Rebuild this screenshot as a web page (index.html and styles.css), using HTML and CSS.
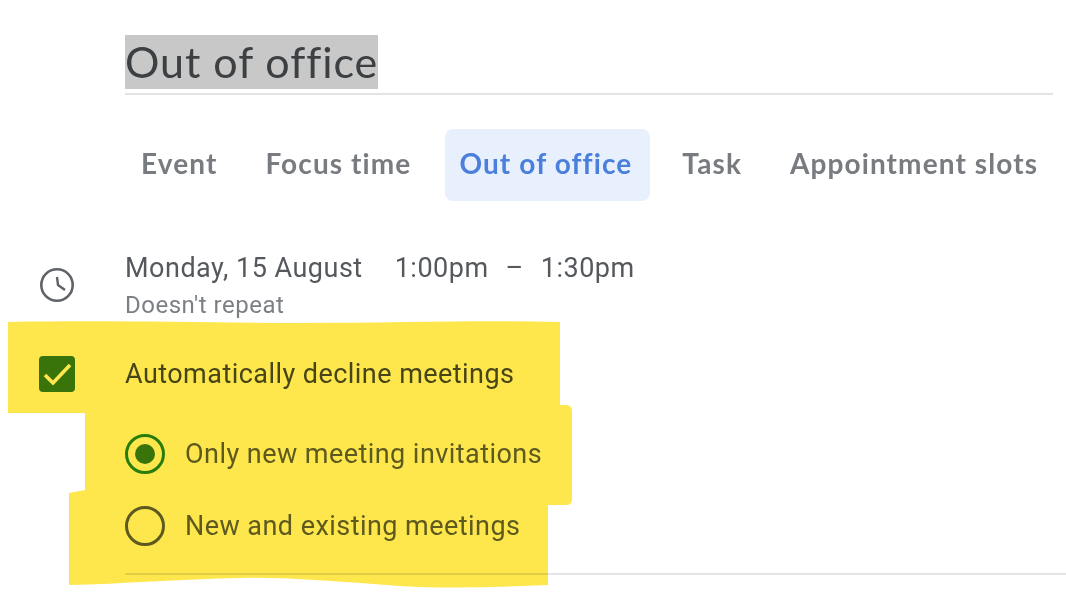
FILE: index.html
```html
<!DOCTYPE html>
<html>
<head>
  <meta charset="utf-8" />
  <title>Out of office</title>
  <link rel="stylesheet" href="styles.css">
</head>
<body>
  <div class="editor">
    <div class="title-row">
      <span class="title">Out of office</span>
    </div>

    <div class="tabs">
      <div class="tab">Event</div>
      <div class="tab">Focus time</div>
      <div class="tab active">Out of office</div>
      <div class="tab">Task</div>
      <div class="tab">Appointment slots</div>
    </div>

    <div class="row when-row">
      <div class="row-icon">
        <svg class="clock" width="36" height="36" viewBox="0 0 36 36" fill="none" stroke="#5f6368">
          <circle cx="18" cy="18" r="15.7" stroke-width="2.6" />
          <path d="M18 10l1 8 7 5" stroke-width="2.4" />
        </svg>
      </div>
      <div>
        <div class="when">
          <span>Monday, 15 August</span>
          <span>1:00pm</span>
          <span class="dash">–</span>
          <span>1:30pm</span>
        </div>
        <div class="repeat">Doesn't repeat</div>
      </div>
    </div>

    <div class="row decline-row">
      <div class="row-icon">
        <div class="checkbox">
          <svg width="36" height="36" viewBox="0 0 36 36" fill="none" stroke="#fff" stroke-width="3.6">
            <path d="M6 19l8 8L31 9" />
          </svg>
        </div>
      </div>
      <div class="label">Automatically decline meetings</div>
    </div>

    <div class="options">
      <div class="option">
        <span class="radio checked"></span>
        <span class="label">Only new meeting invitations</span>
      </div>
      <div class="option">
        <span class="radio"></span>
        <span class="label">New and existing meetings</span>
      </div>
    </div>
  </div>

  <svg class="marker" width="1066" height="610" viewBox="0 0 1066 610">
    <path d="M8 322C120 320 200 323 300 323C400 323 480 320 560 322L560 405L566 405Q572 405 572 411L572 499Q572 505 566 505L548 505L548 585C500 587 450 589 400 586C340 582 290 577 240 578C180 579 120 584 69 585L69 493L85 490L85 413L8 413Z" />
  </svg>
</body>
</html>
```

FILE: styles.css
```css
* {
  margin: 0;
  padding: 0;
  box-sizing: border-box;
}

html, body {
  height: 610px;
  overflow: hidden;
}

body {
  position: relative;
  background: #fff;
  font-family: Roboto, sans-serif;
  color: #3c4043;
}

.editor {
  padding-top: 35px;
  filter: blur(0.6px);
}

.title-row {
  margin-left: 125px;
  margin-right: 13px;
  height: 60px;
  border-bottom: 2px solid #e3e4e6;
}

.title {
  display: inline-block;
  height: 54px;
  line-height: 54px;
  background: #c8c8c8;
  font-family: Lato, sans-serif;
  font-size: 43px;
  font-variant-ligatures: none;
  letter-spacing: 0.95px;
  color: #3c4043;
}

.tabs {
  display: flex;
  align-items: center;
  gap: 16px;
  margin-top: 34px;
  margin-left: 125px;
}

.tab {
  height: 72px;
  line-height: 69px;
  padding: 0 16px;
  border-radius: 8px;
  font-family: Lato, sans-serif;
  font-size: 28px;
  font-weight: 700;
  font-variant-ligatures: none;
  letter-spacing: 1.1px;
  color: #787c81;
  white-space: nowrap;
}

.tab.active {
  margin-left: 2px;
  padding: 0 18px 0 14px;
  background: #e8f0fe;
  color: #4a7fdc;
}

.row {
  display: grid;
  grid-template-columns: 125px 1fr;
}

.row-icon {
  display: flex;
  justify-content: center;
  padding-right: 11px;
}

.when-row {
  margin-top: 49px;
}

.clock {
  margin-top: 17px;
}

.when {
  display: flex;
  font-size: 27px;
  line-height: 36px;
  letter-spacing: 0.5px;
  color: #55595d;
}

.when span + span {
  margin-left: 32px;
}

.when .dash + span,
.when span.dash {
  margin-left: 17px;
}

.repeat {
  margin-top: 4px;
  font-size: 24px;
  line-height: 30px;
  letter-spacing: 0.5px;
  color: #7c8085;
}

.decline-row {
  margin-top: 36px;
  align-items: center;
}

.checkbox {
  width: 36px;
  height: 36px;
  border-radius: 4px;
  background: #38801f;
}

.checkbox svg {
  display: block;
}

.label {
  font-size: 27px;
  line-height: 36px;
  letter-spacing: 0.45px;
  color: #474b4e;
  white-space: nowrap;
}

.options {
  margin-top: 42px;
  margin-left: 125px;
  padding-bottom: 27px;
  border-bottom: 2px solid #e3e4e6;
  display: flex;
  flex-direction: column;
  gap: 32px;
}

.option {
  display: flex;
  align-items: center;
  gap: 20px;
  height: 40px;
}

.option .label {
  color: #5f6368;
}

.radio {
  position: relative;
  flex: none;
  width: 40px;
  height: 40px;
  border-radius: 50%;
  border: 3.5px solid #5f6368;
}

.radio.checked {
  border-color: #288a20;
}

.radio.checked::after {
  content: '';
  position: absolute;
  top: 6.5px;
  left: 6.5px;
  width: 20px;
  height: 20px;
  border-radius: 50%;
  background: #38801f;
}

/* highlighter scribble over the content */
.marker {
  position: absolute;
  top: 0;
  left: 0;
  mix-blend-mode: multiply;
  pointer-events: none;
}

.marker path {
  fill: #fde74c;
}
```
